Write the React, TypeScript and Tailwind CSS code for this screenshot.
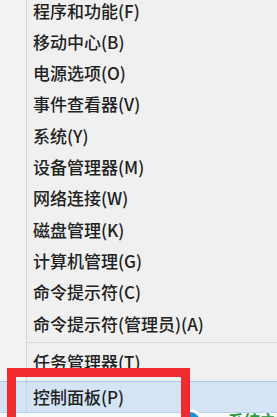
import React from "react";

const items = [
  "程序和功能(F)",
  "移动中心(B)",
  "电源选项(O)",
  "事件查看器(V)",
  "系统(Y)",
  "设备管理器(M)",
  "网络连接(W)",
  "磁盘管理(K)",
  "计算机管理(G)",
  "命令提示符(C)",
  "命令提示符(管理员)(A)",
];

const font = { fontFamily: '"Noto Sans CJK SC", "Noto Sans", sans-serif' };

function Row({ label, h }: { label: string; h: string }) {
  return (
    <div className={`flex ${h}`}>
      <div className="w-[27px] shrink-0 bg-[#f3f3f3] border-r border-[#d4d4d4]" />
      <div className="flex items-center pl-[6px] text-[17px] font-medium text-[#222222] leading-none whitespace-nowrap">
        {label}
      </div>
    </div>
  );
}

export default function App() {
  return (
    <div className="relative w-[277px] h-[417px] overflow-hidden bg-[#f0f0f0]" style={font}>
      <div className="-mt-[5.6px] flex flex-col">
        {items.map((t) => (
          <Row key={t} label={t} h="h-[31.3px]" />
        ))}
        <div className="flex h-[8px]">
          <div className="w-[27px] shrink-0 bg-[#f3f3f3] border-r border-[#d4d4d4]" />
          <div className="flex-1 flex items-center">
            <div className="h-px w-full bg-[#d6d6d6]" />
          </div>
        </div>
        <div className="flex h-[34px]">
          <div className="w-[27px] shrink-0 bg-[#f3f3f3] border-r border-[#d4d4d4]" />
          <div className="flex items-center pl-[6px] pb-[4px] text-[17px] font-medium text-[#222222] leading-none whitespace-nowrap">
            任务管理器(T)
          </div>
        </div>
        <div className="flex h-[31px] bg-[#d4e4f5] border-t border-[#a9c8ea]">
          <div className="w-[27px] shrink-0 border-r border-[#c2d4e8]" />
          <div className="flex items-center pl-[6px] text-[17px] font-medium text-[#222222] leading-none whitespace-nowrap">
            控制面板(P)
          </div>
        </div>
        <div className="relative h-[10px] bg-[#f7f9fb] border-t border-[#b9d2ec]">
          <div className="absolute left-[177px] top-[-4px] w-[26px] h-[26px] rounded-full bg-[#1f8fd6] border-[3px] border-white" />
          <div className="absolute left-[228px] top-[-1px] text-[16px] font-bold text-[#2a9a3a] leading-none whitespace-nowrap">
            系统之家
          </div>
        </div>
      </div>
      <div className="absolute left-[7px] top-[368px] w-[183px] h-[60px] border-[9px] border-[#ef2b2f]" />
    </div>
  );
}
